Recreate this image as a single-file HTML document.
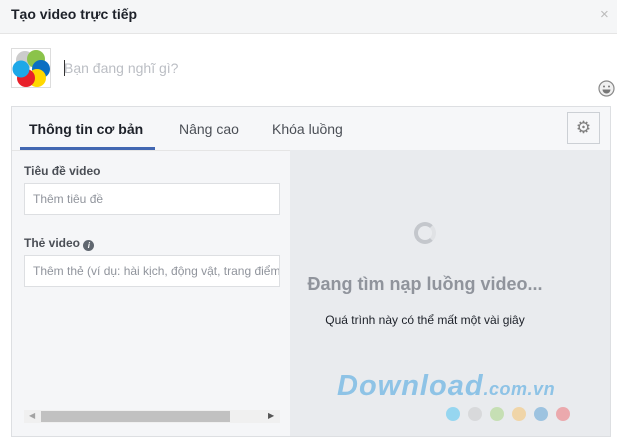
<!DOCTYPE html>
<html><head><meta charset="utf-8"><style>
*{margin:0;padding:0;box-sizing:border-box}
body{width:617px;height:445px;background:#fff;font-family:"Liberation Sans",Arial,sans-serif;position:relative;overflow:hidden}
.a{position:absolute}
</style></head><body>
<div class="a" style="left:0;top:0;width:617px;height:34px;background:#f5f6f7;border-bottom:1px solid #e5e5e5"></div>
<div class="a" style="left:11px;top:6px;font-size:14px;font-weight:bold;color:#1d2129">Tạo video trực tiếp</div>
<div class="a" style="left:600px;top:6px;font-size:15px;color:#bbb">×</div>
<div class="a" style="left:11px;top:48px;width:40px;height:40px;border:1px solid #ddd;background:#fff;overflow:hidden">
<svg width="38" height="38" viewBox="0 0 38 38"><circle cx="13" cy="11" r="9" fill="#ccc"/><circle cx="24" cy="10" r="9" fill="#8bc34a"/><circle cx="29" cy="20" r="9" fill="#0a6fc2"/><circle cx="25" cy="29" r="9" fill="#ffd800"/><circle cx="14" cy="29" r="9" fill="#e8202a"/><circle cx="9" cy="20" r="8.5" fill="#1ea8e8"/></svg></div>
<div class="a" style="left:64px;top:60px;width:1px;height:16px;background:#333"></div>
<div class="a" style="left:64px;top:60px;font-size:14px;color:#bbbec4">Bạn đang nghĩ gì?</div>
<svg class="a" style="left:598px;top:80px" width="17" height="17" viewBox="0 0 17 17"><circle cx="8.5" cy="8.5" r="7.5" fill="#f0f0f0" stroke="#888" stroke-width="1.2"/><circle cx="6" cy="6.5" r="1" fill="#777"/><circle cx="11" cy="6.5" r="1" fill="#777"/><path d="M4.5 9.5h8a4 4 0 0 1-8 0z" fill="#777"/></svg>
<div class="a" style="left:11px;top:106px;width:600px;height:331px;border:1px solid #dddfe2;background:#f6f7f9"></div>
<div class="a" style="left:12px;top:150px;width:278px;height:286px;background:#f5f6f8;border-top:1px solid #e5e5e5"></div>
<div class="a" style="left:290px;top:150px;width:320px;height:286px;background:#e9ebee"></div>
<div class="a" style="left:29px;top:121px;font-size:14px;font-weight:bold;color:#1d2129">Thông tin cơ bản</div>
<div class="a" style="left:20px;top:147px;width:135px;height:3px;background:#4267b2"></div>
<div class="a" style="left:179px;top:121px;font-size:14px;color:#4b4f56">Nâng cao</div>
<div class="a" style="left:272px;top:121px;font-size:14px;color:#4b4f56">Khóa luồng</div>
<div class="a" style="left:567px;top:112px;width:33px;height:32px;border:1px solid #ccd0d5;background:#f6f7f9;color:#7f7f7f;font-size:17px;text-align:center;line-height:30px">⚙</div>
<div class="a" style="left:24px;top:164px;font-size:12px;font-weight:bold;color:#4b4f56">Tiêu đề video</div>
<div class="a" style="left:24px;top:183px;width:256px;height:32px;background:#fff;border:1px solid #dddfe2;padding:8px 8px;font-size:12px;color:#90949c">Thêm tiêu đề</div>
<div class="a" style="left:24px;top:236px;font-size:12px;font-weight:bold;color:#4b4f56">Thẻ video <span style="display:inline-block;width:11px;height:11px;border-radius:50%;background:#606770;color:#fff;font-size:8px;text-align:center;line-height:11px;font-style:italic;vertical-align:-1px">i</span></div>
<div class="a" style="left:24px;top:255px;width:256px;height:32px;background:#fff;border:1px solid #dddfe2;padding:8px 8px;font-size:12px;color:#90949c;white-space:nowrap;overflow:hidden">Thêm thẻ (ví dụ: hài kịch, động vật, trang điểm)</div>
<div class="a" style="left:24px;top:410px;width:256px;height:13px;background:#f0f0f0"></div>
<div class="a" style="left:41px;top:411px;width:189px;height:11px;background:#c1c1c1"></div>
<div class="a" style="left:29px;top:411px;font-size:8px;color:#a3a3a3">◀</div>
<div class="a" style="left:268px;top:411px;font-size:8px;color:#555">▶</div>
<div class="a" style="left:414px;top:222px;width:22px;height:22px;border-radius:50%;border:4px solid #c4c7cc;border-right-color:#e0e2e5"></div>
<div class="a" style="left:290px;top:274px;width:270px;text-align:center;font-size:18px;font-weight:bold;color:#90949c">Đang tìm nạp luồng video...</div>
<div class="a" style="left:290px;top:313px;width:270px;text-align:center;font-size:12px;color:#1d2129">Quá trình này có thể mất một vài giây</div>
<div class="a" style="left:337px;top:370px;font-size:29px;font-weight:bold;font-style:italic;color:#8ec3e6;letter-spacing:1px;white-space:nowrap">Download<span style="font-size:18px;letter-spacing:0.5px">.com.vn</span></div>
<div class="a" style="left:446px;top:407px;width:14px;height:14px;border-radius:50%;background:#96d6f0"></div>
<div class="a" style="left:468px;top:407px;width:14px;height:14px;border-radius:50%;background:#d8d9db"></div>
<div class="a" style="left:490px;top:407px;width:14px;height:14px;border-radius:50%;background:#c6dfb4"></div>
<div class="a" style="left:512px;top:407px;width:14px;height:14px;border-radius:50%;background:#f0d5a8"></div>
<div class="a" style="left:534px;top:407px;width:14px;height:14px;border-radius:50%;background:#9dc3e0"></div>
<div class="a" style="left:556px;top:407px;width:14px;height:14px;border-radius:50%;background:#eba9ad"></div>
</body></html>
